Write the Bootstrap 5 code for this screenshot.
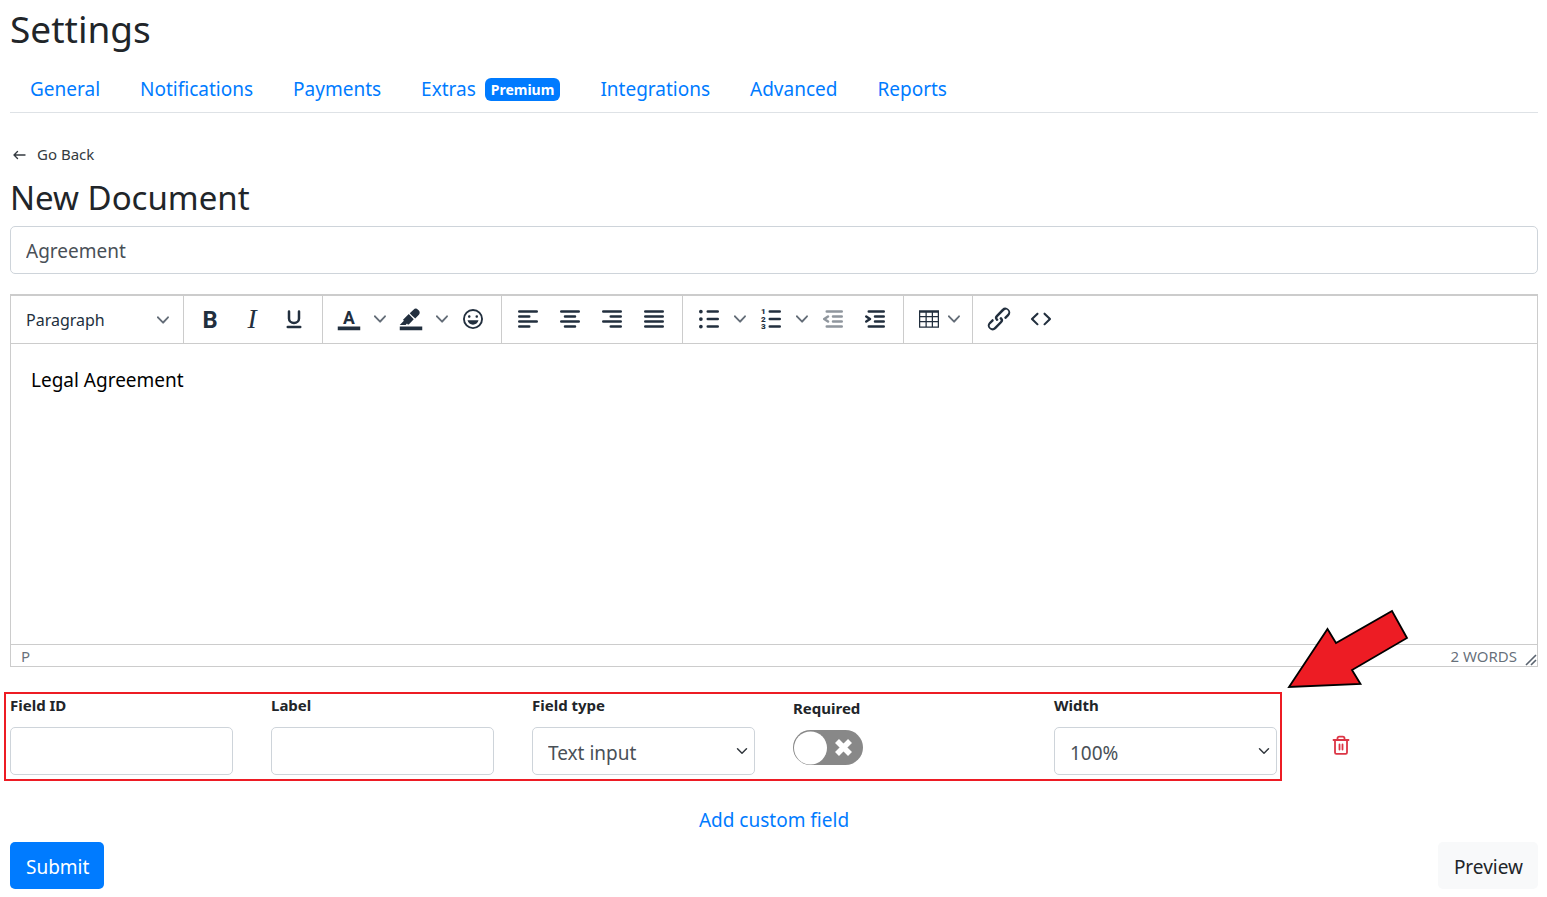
<!DOCTYPE html>
<html lang="en">
<head>
<meta charset="utf-8">
<meta name="viewport" content="width=device-width, initial-scale=1">
<title>Settings</title>
<link href="https://cdn.jsdelivr.net/npm/bootstrap@5.3.0/dist/css/bootstrap.min.css" rel="stylesheet">
<script src="https://cdn.jsdelivr.net/npm/bootstrap@5.3.0/dist/js/bootstrap.bundle.min.js"></script>
<style>
  :root { --brand: #007bff; --ink: #212529; --line: #ccc; --icon: #222f3e; }
  body { font-family: "Noto Sans", "Open Sans", sans-serif; font-size: 19px; line-height: 28px; color: var(--ink); background: #fff; }
  .page { padding: 3px 9px 8px 10px; }
  h1 { font-size: 37px; line-height: 52px; font-weight: 400; margin: 0; }
  h2 { font-size: 33px; line-height: 48px; font-weight: 400; margin: 6px 0 0; }
  .tabs { border-bottom: 1px solid #dee2e6; margin-top: 9px; }
  .tabs .nav-link { color: var(--brand); line-height: 28px; font-size: 19px; padding: 11px 20px 9px; }
  .tag { --bs-badge-font-size: 14px; --bs-badge-padding-x: 6px; --bs-badge-padding-y: 5px; background: var(--brand); margin-left: 4px; line-height: 13px; vertical-align: 1px; }
  .back { font-size: 15px; line-height: 24px; color: #343a40; gap: 10px; padding-left: 3px; margin-top: 29px; }
  .field { height: 48px; font-size: 19px; line-height: 28px; color: #495057; border: 1px solid #ced4da; border-radius: 5px; padding: 10px 15px 8px; }
  select.field { padding-top: 11px; padding-bottom: 7px; background-position: right 6px center; background-size: 12px 12px; }
  .editor { margin-top: 20px; border: 1px solid var(--line); }
  .bar { border-top: 1px solid var(--line); border-bottom: 1px solid var(--line); height: 49px; }
  .group { border-right: 1px solid var(--line); padding: 0 6px; }
  .group:last-child { border-right: 0; }
  .tool { border: 0; background: none; padding: 0 2px 2px 0; width: 42px; height: 42px; color: var(--icon); display: flex; align-items: center; justify-content: center; }
  .tool svg { width: 30px; height: 30px; fill: currentColor; flex: none; }
  .tool svg.lines { fill: none; stroke: currentColor; stroke-width: 2; stroke-linecap: round; stroke-linejoin: round; }
  .tool.more { width: 20px; }
  .tool.wide { width: 56px; }
  .tool.off { opacity: .5; }
  .tool svg.chev, .style-pick svg.chev { width: 12px; height: 12px; fill: var(--icon); opacity: .7; flex: none; }
  .style-pick { border: 0; background: none; width: 160px; padding: 0 8px 0 9px; font-size: 16px; color: var(--icon); }
  .draft { display: block; width: 100%; height: 300px; border: 0; resize: none; padding: 22px 20px; color: #000; outline: 0; }
  .status { border-top: 1px solid var(--line); height: 22px; font-size: 15px; line-height: 22px; color: rgba(34,47,62,.7); padding: 0 0 0 10px; }
  .fields { display: grid; grid-template-columns: repeat(6, 1fr); gap: 38px; margin-top: 27px; position: relative; }
  .fields label { display: block; font-size: 15px; line-height: 22px; font-weight: 700; margin-bottom: 11px; }
  .fields .low { margin: 3px 0 11px; }
  .switch { appearance: none; display: block; width: 70px; height: 35px; margin: 0; border: 0; border-radius: 18px; background: #888 url("data:image/svg+xml,%3Csvg xmlns='http://www.w3.org/2000/svg' viewBox='0 0 70 35'%3E%3Ccircle cx='17.5' cy='18' r='16.5' fill='%23fff'/%3E%3Cpath d='M44 11l13 13M57 11L44 24' stroke='%23fff' stroke-width='5.6'/%3E%3C/svg%3E") center / 100% 100% no-repeat; }
  .bin { border: 0; background: none; color: #dc3545; padding: 8px 17px; margin-top: 33px; }
  .mark-box { position: absolute; left: -6px; right: calc((100% + 38px) / 6 - 5px); top: -2px; bottom: -6px; border: 2px solid #ed1c24; pointer-events: none; }
  .pointer { position: absolute; left: calc(100% + 6px); top: -86px; }
  .add-row { margin-top: 31px; }
  .add { color: var(--brand); text-decoration: none; }
  .action { line-height: 28px; height: 47px; padding: 11px 15px 8px 16px; border: 0; border-radius: 5px; }
  .go { background: var(--brand); color: #fff; }
  .look { background: #f8f9fa; color: var(--ink); }
</style>
</head>
<body>
<svg class="d-none" xmlns="http://www.w3.org/2000/svg">
  <symbol id="chev" viewBox="0 0 10 10"><path d="M8.7 2.2c.3-.3.8-.3 1 0 .4.4.4.9 0 1.2L5.7 7.8c-.3.3-.9.3-1.2 0L.2 3.4a.8.8 0 0 1 0-1.2c.3-.3.8-.3 1.1 0L5 6l3.7-3.8z"/></symbol>
</svg>
<main class="page">
  <h1>Settings</h1>
  <nav class="nav tabs" aria-label="Settings sections">
    <a class="nav-link" href="#">General</a>
    <a class="nav-link" href="#">Notifications</a>
    <a class="nav-link" href="#">Payments</a>
    <a class="nav-link" href="#">Extras <span class="badge tag">Premium</span></a>
    <a class="nav-link" href="#">Integrations</a>
    <a class="nav-link" href="#">Advanced</a>
    <a class="nav-link" href="#">Reports</a>
  </nav>

  <a class="back d-inline-flex align-items-center text-decoration-none" href="#">
    <svg width="14" height="14" viewBox="0 0 14 14" fill="none" stroke="currentColor" stroke-width="1.4" stroke-linecap="round" stroke-linejoin="round"><path d="M12 8H1M4.500 4.500L1 8l3.500 3.500"/></svg>
    <span>Go Back</span>
  </a>
  <h2>New Document</h2>
  <input class="form-control field mt-1" type="text" value="Agreement" aria-label="Document title">

  <section class="editor" aria-label="Document editor">
    <div class="bar d-flex">
      <div class="group d-flex align-items-center">
        <button class="style-pick d-flex align-items-center justify-content-between" type="button"><span>Paragraph</span><svg class="chev"><use href="#chev"/></svg></button>
      </div>
      <div class="group d-flex align-items-center">
        <button class="tool" type="button" aria-label="Bold"><svg viewBox="0 0 24 24"><text x="12" y="19" text-anchor="middle" font-family="Roboto" font-weight="700" font-size="19">B</text></svg></button>
        <button class="tool" type="button" aria-label="Italic"><svg viewBox="0 0 24 24"><text x="12" y="19" text-anchor="middle" font-family="Liberation Serif" font-style="italic" font-size="22">I</text></svg></button>
        <button class="tool" type="button" aria-label="Underline"><svg class="lines" viewBox="0 0 24 24"><path d="M8 6v5.500a4 3.600 0 0 0 8 0V6M7 18.300h10"/></svg></button>
      </div>
      <div class="group d-flex align-items-center">
        <button class="tool" type="button" aria-label="Text color"><svg viewBox="0 0 24 24"><path d="M3 18h18v3H3z"/><text x="12" y="16" text-anchor="middle" font-family="Roboto" font-weight="700" font-size="14">A</text></svg></button>
        <button class="tool more" type="button" aria-label="Text color options"><svg class="chev"><use href="#chev"/></svg></button>
        <button class="tool" type="button" aria-label="Highlight color"><svg viewBox="0 0 24 24"><path d="M3 18h18v3H3z"/><path d="M7.700 16.700H3l3.300-3.300-.7-.8L10.200 8l4 4.100-4 4.200c-.2.2-.6.2-.8 0l-.6-.7-1.100 1.100zM12.700 9.200L11 7.400l3-2.900a2.600 2.600 0 0 1 3.600 0L18.300 5.200c.9.9.9 2.500 0 3.400l-2.900 2.900-2.700-2.300z"/></svg></button>
        <button class="tool more" type="button" aria-label="Highlight options"><svg class="chev"><use href="#chev"/></svg></button>
        <button class="tool" type="button" aria-label="Emoticons"><svg viewBox="0 0 24 24"><path d="M9 11c.6 0 1-.4 1-1s-.4-1-1-1a1 1 0 0 0-1 1c0 .6.4 1 1 1zm6 0c.6 0 1-.4 1-1s-.4-1-1-1a1 1 0 0 0-1 1c0 .6.4 1 1 1zm-3 5.500c2.100 0 4-1.500 4.400-3.500H7.600c.5 2 2.300 3.500 4.400 3.500zM12 4a8 8 0 1 0 0 16 8 8 0 0 0 0-16zm0 14.500a6.500 6.500 0 1 1 0-13 6.500 6.500 0 0 1 0 13z"/></svg></button>
      </div>
      <div class="group d-flex align-items-center">
        <button class="tool" type="button" aria-label="Align left"><svg class="lines" viewBox="0 0 24 24"><path d="M5 6h14M5 10h8M5 14h14M5 18h8"/></svg></button>
        <button class="tool" type="button" aria-label="Align center"><svg class="lines" viewBox="0 0 24 24"><path d="M5 6h14M8 10h8M5 14h14M8 18h8"/></svg></button>
        <button class="tool" type="button" aria-label="Align right"><svg class="lines" viewBox="0 0 24 24"><path d="M5 6h14M11 10h8M5 14h14M11 18h8"/></svg></button>
        <button class="tool" type="button" aria-label="Justify"><svg class="lines" viewBox="0 0 24 24"><path d="M5 6h14M5 10h14M5 14h14M5 18h14"/></svg></button>
      </div>
      <div class="group d-flex align-items-center">
        <button class="tool" type="button" aria-label="Bullet list"><svg class="lines" viewBox="0 0 24 24"><path d="M11 6h8M11 12h8M11 18h8"/><path stroke-width="3" d="M5.500 6h0M5.500 12h0M5.500 18h0"/></svg></button>
        <button class="tool more" type="button" aria-label="Bullet options"><svg class="chev"><use href="#chev"/></svg></button>
        <button class="tool" type="button" aria-label="Numbered list"><svg viewBox="0 0 24 24"><path fill="none" stroke="currentColor" stroke-width="2" stroke-linecap="round" d="M11 6h8M11 12h8M11 18h8"/><g font-family="Roboto" font-weight="900" font-size="6.500"><text x="4" y="8">1</text><text x="4" y="14">2</text><text x="4" y="20">3</text></g></svg></button>
        <button class="tool more" type="button" aria-label="Numbering options"><svg class="chev"><use href="#chev"/></svg></button>
        <button class="tool off" type="button" aria-label="Decrease indent"><svg class="lines" viewBox="0 0 24 24"><path d="M7 6h12M12 10h7M12 14h7M7 18h12M8 10l-3 2 3 2"/></svg></button>
        <button class="tool" type="button" aria-label="Increase indent"><svg class="lines" viewBox="0 0 24 24"><path d="M7 6h12M12 10h7M12 14h7M7 18h12M5 10l3 2-3 2"/></svg></button>
      </div>
      <div class="group d-flex align-items-center">
        <button class="tool wide" type="button" aria-label="Table"><svg viewBox="0 0 24 24"><path fill-rule="evenodd" d="M4 5h16v14H4zM5 7v2.500h4.200V7zM10.200 7v2.500h4V7zM15.200 7v2.500H19V7zM5 10.500v3h4.200v-3zM10.200 10.500v3h4v-3zM15.200 10.500v3H19v-3zM5 14.500V18h4.200v-3.500zM10.200 14.500V18h4v-3.500zM15.200 14.500V18H19v-3.500z"/></svg><svg class="chev ms-1"><use href="#chev"/></svg></button>
      </div>
      <div class="group d-flex align-items-center">
        <button class="tool" type="button" aria-label="Link"><svg viewBox="0 0 24 24"><path d="M6.200 12.300a1 1 0 0 1 1.400 1.400l-2.100 2a2 2 0 1 0 2.700 2.800l4.800-4.800a1 1 0 0 0 0-1.400 1 1 0 1 1 1.400-1.300 2.900 2.900 0 0 1 0 4L9.600 20a3.900 3.900 0 0 1-5.500-5.500l2-2zm11.600-.6a1 1 0 0 1-1.400-1.400l2-2a2 2 0 1 0-2.600-2.800L11 10.300a1 1 0 0 0 0 1.400A1 1 0 1 1 9.600 13a2.900 2.900 0 0 1 0-4L14.400 4a3.900 3.900 0 0 1 5.500 5.500l-2 2z"/></svg></button>
        <button class="tool" type="button" aria-label="Source code"><svg viewBox="0 0 24 24"><path d="M9.800 15.700c.3.3.3.8 0 1-.3.4-.9.4-1.200 0l-4.400-4.100a.8.8 0 0 1 0-1.200l4.400-4.200c.3-.3.9-.3 1.200 0 .3.3.3.8 0 1.100L6 12l3.800 3.700zM14.200 15.700c-.3.3-.3.8 0 1 .4.4.9.4 1.200 0l4.400-4.100c.3-.3.3-.9 0-1.200l-4.400-4.200a.8.8 0 0 0-1.200 0c-.3.3-.3.8 0 1.100L18 12l-3.800 3.700z"/></svg></button>
      </div>
    </div>
    <textarea class="draft" aria-label="Document text">Legal Agreement</textarea>
    <div class="status d-flex justify-content-between">
      <span>P</span>
      <span class="d-flex"><span class="me-2">2 WORDS</span><svg class="align-self-end" width="12" height="12" viewBox="0 0 12 12" fill="none" stroke="#5a6470" stroke-width="1.600"><path d="M1 11L11 1M6 11l5-5"/></svg></span>
    </div>
  </section>

  <form>
    <div class="fields">
      <div><label for="fid">Field ID</label><input class="form-control field" id="fid" type="text"></div>
      <div><label for="flabel">Label</label><input class="form-control field" id="flabel" type="text"></div>
      <div><label for="ftype">Field type</label><select class="form-select field" id="ftype"><option>Text input</option></select></div>
      <div><label class="low" for="freq">Required</label><input class="switch" id="freq" type="checkbox"></div>
      <div><label for="fwidth">Width</label><select class="form-select field" id="fwidth"><option>100%</option></select></div>
      <div><button class="bin d-flex" type="button" aria-label="Delete field"><svg width="18" height="20" viewBox="0 0 18 20" fill="none" stroke="currentColor" stroke-width="1.800" stroke-linecap="round" stroke-linejoin="round"><path d="M1.500 5h15M3 5v12.500a1.300 1.300 0 0 0 1.300 1.300h9.400a1.300 1.300 0 0 0 1.300-1.300V5M5.500 5V3.300a1.700 1.700 0 0 1 1.700-1.700h3.600a1.700 1.700 0 0 1 1.700 1.700V5M7.500 9.500v5M10.500 9.500v5"/></svg></button></div>
      <div class="mark-box">
        <svg class="pointer" width="124" height="82" viewBox="0 0 124 82" fill="#ed1c24" stroke="#000" stroke-width="1.800"><path d="M3 79L41.500 21 50 35l56-32 15 27-55 32 8.500 14z"/></svg>
      </div>
    </div>
    <div class="add-row text-center"><a class="add" href="#">Add custom field</a></div>
    <div class="d-flex justify-content-between mt-2">
      <button class="action go" type="submit">Submit</button>
      <button class="action look" type="button">Preview</button>
    </div>
  </form>
</main>
</body>
</html>
